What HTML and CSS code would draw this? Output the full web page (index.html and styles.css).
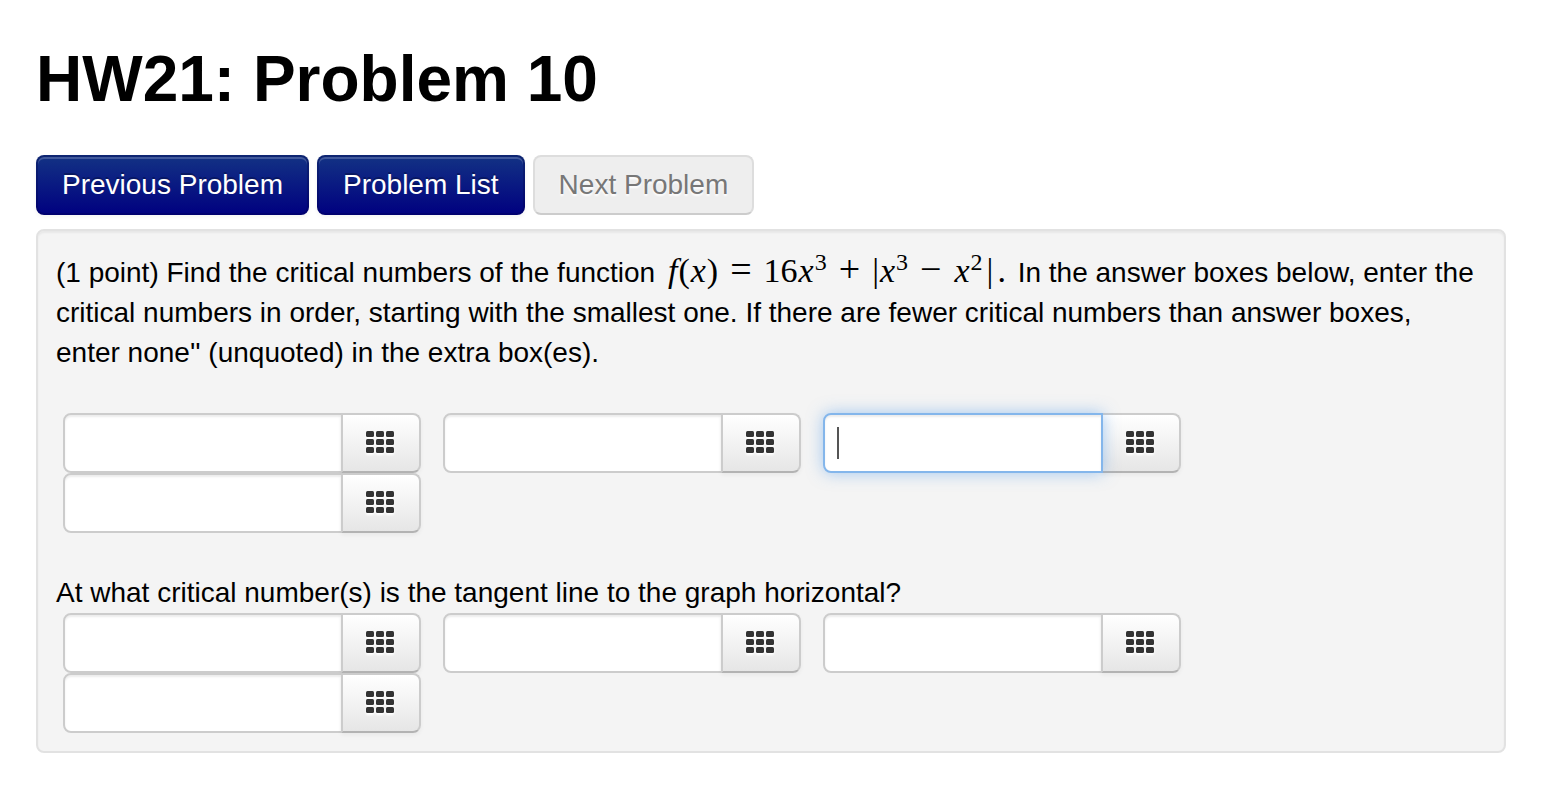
FILE: index.html
```html
<!DOCTYPE html>
<html lang="en">
<head>
  <meta charset="UTF-8">
  <meta name="viewport" content="width=device-width, initial-scale=1.0">
  <title>HW21: Problem 10</title>
  <link rel="stylesheet" href="styles.css">
</head>
<body>

  <!-- keypad icon shared by all answer buttons -->
  <svg class="sprite" aria-hidden="true">
    <symbol id="keypad" viewBox="0 0 28 22">
      <rect x="0" y="0" width="8" height="6" rx="1.5"/>
      <rect x="10" y="0" width="8" height="6" rx="1.5"/>
      <rect x="20" y="0" width="8" height="6" rx="1.5"/>
      <rect x="0" y="8" width="8" height="6" rx="1.5"/>
      <rect x="10" y="8" width="8" height="6" rx="1.5"/>
      <rect x="20" y="8" width="8" height="6" rx="1.5"/>
      <rect x="0" y="16" width="8" height="6" rx="1.5"/>
      <rect x="10" y="16" width="8" height="6" rx="1.5"/>
      <rect x="20" y="16" width="8" height="6" rx="1.5"/>
    </symbol>
  </svg>

  <h1>HW21: Problem 10</h1>

  <nav class="problem-nav">
    <a class="btn btn-primary" href="#previous">Previous Problem</a>
    <a class="btn btn-primary" href="#list">Problem List</a>
    <button class="btn" type="button" disabled>Next Problem</button>
  </nav>

  <form class="problem">
    <p>(1 point) Find the critical numbers of the function <span class="math"><i>f</i>(<i>x</i>)<span class="op">=</span>16<i>x</i><sup>3</sup><span class="op">+</span>|<i>x</i><sup>3</sup><span class="op">−</span><i>x</i><sup>2</sup><span class="bar">|</span>.</span> In the answer boxes below, enter the critical numbers in order, starting with the smallest one. If there are fewer critical numbers than answer boxes, enter none'' (unquoted) in the extra box(es).</p>

    <div class="answers">
      <div class="answer">
        <input type="text" aria-label="Answer 1">
        <button type="button" aria-label="Equation editor 1"><svg><use href="#keypad"/></svg></button>
      </div>
      <div class="answer">
        <input type="text" aria-label="Answer 2">
        <button type="button" aria-label="Equation editor 2"><svg><use href="#keypad"/></svg></button>
      </div>
      <div class="answer">
        <input class="active" type="text" aria-label="Answer 3">
        <button type="button" aria-label="Equation editor 3"><svg><use href="#keypad"/></svg></button>
      </div>
      <div class="answer">
        <input type="text" aria-label="Answer 4">
        <button type="button" aria-label="Equation editor 4"><svg><use href="#keypad"/></svg></button>
      </div>
    </div>

    <p>At what critical number(s) is the tangent line to the graph horizontal?</p>

    <div class="answers">
      <div class="answer">
        <input type="text" aria-label="Answer 5">
        <button type="button" aria-label="Equation editor 5"><svg><use href="#keypad"/></svg></button>
      </div>
      <div class="answer">
        <input type="text" aria-label="Answer 6">
        <button type="button" aria-label="Equation editor 6"><svg><use href="#keypad"/></svg></button>
      </div>
      <div class="answer">
        <input type="text" aria-label="Answer 7">
        <button type="button" aria-label="Equation editor 7"><svg><use href="#keypad"/></svg></button>
      </div>
      <div class="answer">
        <input type="text" aria-label="Answer 8">
        <button type="button" aria-label="Equation editor 8"><svg><use href="#keypad"/></svg></button>
      </div>
    </div>
  </form>

</body>
</html>
```
FILE: styles.css
```css
* {
  box-sizing: border-box;
}

body {
  margin: 0;
  padding: 39px 50px 40px 36px;
  font-family: "Liberation Sans", Arial, sans-serif;
  font-size: 28px;
  line-height: 40px;
  color: #000;
  background: #fff;
}

.sprite {
  display: none;
}

h1 {
  margin: 0 0 36px;
  font-size: 64px;
  line-height: 80px;
}

.problem-nav {
  display: flex;
  flex-wrap: wrap;
  gap: 8px;
  margin-bottom: 14px;
}

.btn {
  padding: 8px 24px;
  font: inherit;
  color: #777;
  text-decoration: none;
  text-shadow: 0 2px 2px #fff;
  background: #eee;
  border: 2px solid #ddd;
  border-bottom-color: #ccc;
  border-radius: 8px;
}

.btn-primary {
  color: #fff;
  text-shadow: 0 -2px 0 rgba(0, 0, 0, 0.25);
  background: linear-gradient(#133384, #000080) border-box;
  border-color: rgba(0, 0, 60, 0.25);
  box-shadow: inset 0 2px 0 rgba(255, 255, 255, 0.2), 0 2px 4px rgba(0, 0, 0, 0.05);
}

.problem {
  padding: 22px 28px 18px 18px;
  background: #f4f4f4;
  border: 2px solid #e2e2e2;
  border-radius: 8px;
  box-shadow: inset 0 2px 2px rgba(0, 0, 0, 0.05);
}

p {
  margin: 0;
}

.math {
  margin: 0 4px;
  font-family: "Liberation Serif", "Times New Roman", serif;
  font-size: 34px;
  line-height: 1;
  white-space: nowrap;
}

.math i {
  margin: 0 1px;
}

.math sup {
  font-size: 24px;
  line-height: 0;
  vertical-align: 12px;
}

.op {
  margin: 0 12px;
  font-size: 38px;
  line-height: 0;
}

.bar {
  margin: 0 4px;
}

.answers {
  display: flex;
  flex-wrap: wrap;
  column-gap: 22px;
  padding-left: 7px;
}

p + .answers {
  margin-bottom: 40px;
}

p:first-child {
  margin-bottom: 40px;
}

.answers:last-child {
  margin-bottom: 0;
}

.answer {
  display: flex;
}

.answer input {
  width: 280px;
  height: 60px;
  padding: 8px 12px;
  font: inherit;
  background: #fff;
  border: 2px solid #ccc;
  border-radius: 8px 0 0 8px;
  box-shadow: inset 0 2px 2px rgba(0, 0, 0, 0.075);
  outline: none;
}

/* the box being typed in, with its text cursor */
.answer .active {
  position: relative;
  background: linear-gradient(#555, #555) 12px center / 2px 32px no-repeat #fff;
  border-color: #84b6eb;
  box-shadow: inset 0 2px 2px rgba(0, 0, 0, 0.075), 0 0 16px rgba(82, 156, 236, 0.5);
  z-index: 1;
}

.answer button {
  display: flex;
  align-items: center;
  justify-content: center;
  width: 80px;
  height: 60px;
  margin-left: -2px;
  padding: 0 2px 2px 0;
  background: linear-gradient(#fff, #e6e6e6);
  border: 2px solid #ccc;
  border-bottom-color: #b3b3b3;
  border-radius: 0 8px 8px 0;
  box-shadow: inset 0 2px 0 rgba(255, 255, 255, 0.2), 0 2px 4px rgba(0, 0, 0, 0.05);
}

.answer svg {
  width: 28px;
  height: 22px;
  fill: #333;
  filter: drop-shadow(0 2px 1px #fff);
}
```
